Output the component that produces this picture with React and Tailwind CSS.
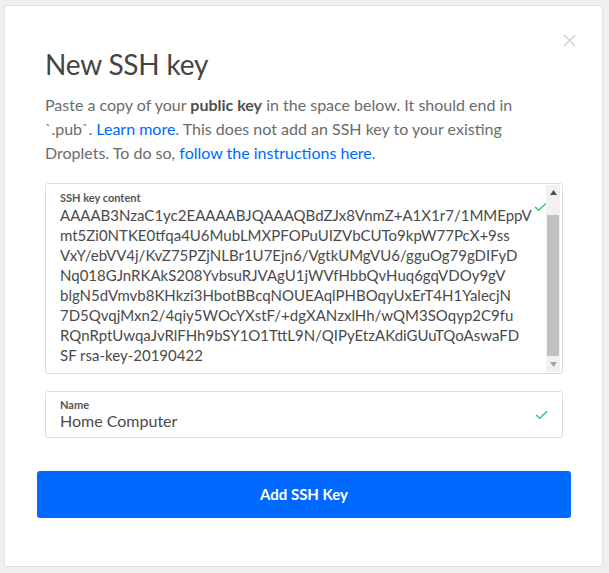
import React from 'react';

const keyLines = [
  'AAAAB3NzaC1yc2EAAAABJQAAAQBdZJx8VnmZ+A1X1r7/1MMEppV',
  'mt5Zi0NTKE0tfqa4U6MubLMXPFOPuUIZVbCUTo9kpW77PcX+9ss',
  'VxY/ebVV4j/KvZ75PZjNLBr1U7Ejn6/VgtkUMgVU6/gguOg79gDIFyD',
  'Nq018GJnRKAkS208YvbsuRJVAgU1jWVfHbbQvHuq6gqVDOy9gV',
  'blgN5dVmvb8KHkzi3HbotBBcqNOUEAqlPHBOqyUxErT4H1YalecjN',
  '7D5QvqjMxn2/4qiy5WOcYXstF/+dgXANzxlHh/wQM3SOqyp2C9fu',
  'RQnRptUwqaJvRlFHh9bSY1O1TttL9N/QIPyEtzAKdiGUuTQoAswaFD',
  'SF rsa-key-20190422',
];

const Check = ({ className }) => (
  <svg className={className} viewBox="0 0 14 10" fill="none" stroke="#2dcc70" strokeWidth="1.6" strokeLinecap="round" strokeLinejoin="round">
    <path d="M1.5 5.2 L5 8.5 L12.5 1.5" />
  </svg>
);

const App = () => {
  return (
    <div className="min-h-screen bg-[#efefef] pt-[5px] pl-[4px] font-['Lato','Liberation_Sans',sans-serif]">
      <div className="relative w-[599px] h-[562px] bg-white rounded-[3px] border border-[#e2e2e2] pl-[40px] pr-[39px] pt-[41px]">
        {/* close */}
        <svg className="absolute top-[28px] right-[26px] w-[13px] h-[13px]" viewBox="0 0 13 13" stroke="#cfcfcf" strokeWidth="1.4">
          <path d="M1 1 L12 12 M12 1 L1 12" />
        </svg>

        <h1 className="text-[28px] leading-[34px] tracking-[-0.2px] text-[#444]">New SSH key</h1>

        <p className="mt-[12px] text-[16px] leading-[24px] text-[#6b6b6b]">
          Paste a copy of your <span className="font-bold text-[#4f4f4f]">public key</span> in the space below. It should end in `.pub`.{' '}
          <span className="text-[#0069ff]">Learn more</span>. This does not add an SSH key to your existing Droplets. To do so,{' '}
          <span className="text-[#0069ff]">follow the instructions here</span>.
        </p>

        {/* key content */}
        <div className="relative mt-[18px] h-[191px] rounded-[3px] border border-[#dcdcdc] pl-[14px] pt-[7px] overflow-hidden">
          <div className="text-[11px] leading-[13px] font-bold text-[#555]">SSH key content</div>
          <div className="mt-[1px] text-[15px] leading-[20px] text-[#4a4a4a]">
            {keyLines.map((l) => (
              <div key={l} className="whitespace-nowrap">{l}</div>
            ))}
          </div>
          <Check className="absolute right-[15px] top-[18px] w-[13px] h-[10px]" />
          {/* scrollbar */}
          <div className="absolute right-[2px] top-[1px] bottom-[1px] w-[14px] bg-[#f1f1f1] flex flex-col items-center">
            <div className="h-[16px] flex items-center justify-center">
              <svg className="w-[7px] h-[5px]" viewBox="0 0 7 5"><path d="M0 5 L3.5 0 L7 5 Z" fill="#505050" /></svg>
            </div>
            <div className="mt-[14px] w-[12px] h-[142px] bg-[#c1c1c1]" />
            <div className="mt-auto h-[16px] flex items-center justify-center">
              <svg className="w-[7px] h-[5px]" viewBox="0 0 7 5"><path d="M0 0 L3.5 5 L7 0 Z" fill="#a3a3a3" /></svg>
            </div>
          </div>
        </div>

        {/* name */}
        <div className="relative mt-[17px] h-[47px] rounded-[3px] border border-[#dcdcdc] pl-[14px] pt-[6px]">
          <div className="text-[11px] leading-[13px] font-bold text-[#555]">Name</div>
          <div className="text-[16px] leading-[20px] text-[#4a4a4a]">Home Computer</div>
          <Check className="absolute right-[14px] top-[18px] w-[13px] h-[10px]" />
        </div>

        <button className="-ml-[8px] mt-[33px] w-[534px] h-[47px] rounded-[3px] bg-[#0069ff] text-white text-[15px] font-bold">
          Add SSH Key
        </button>
      </div>
    </div>
  );
};

export default App;
